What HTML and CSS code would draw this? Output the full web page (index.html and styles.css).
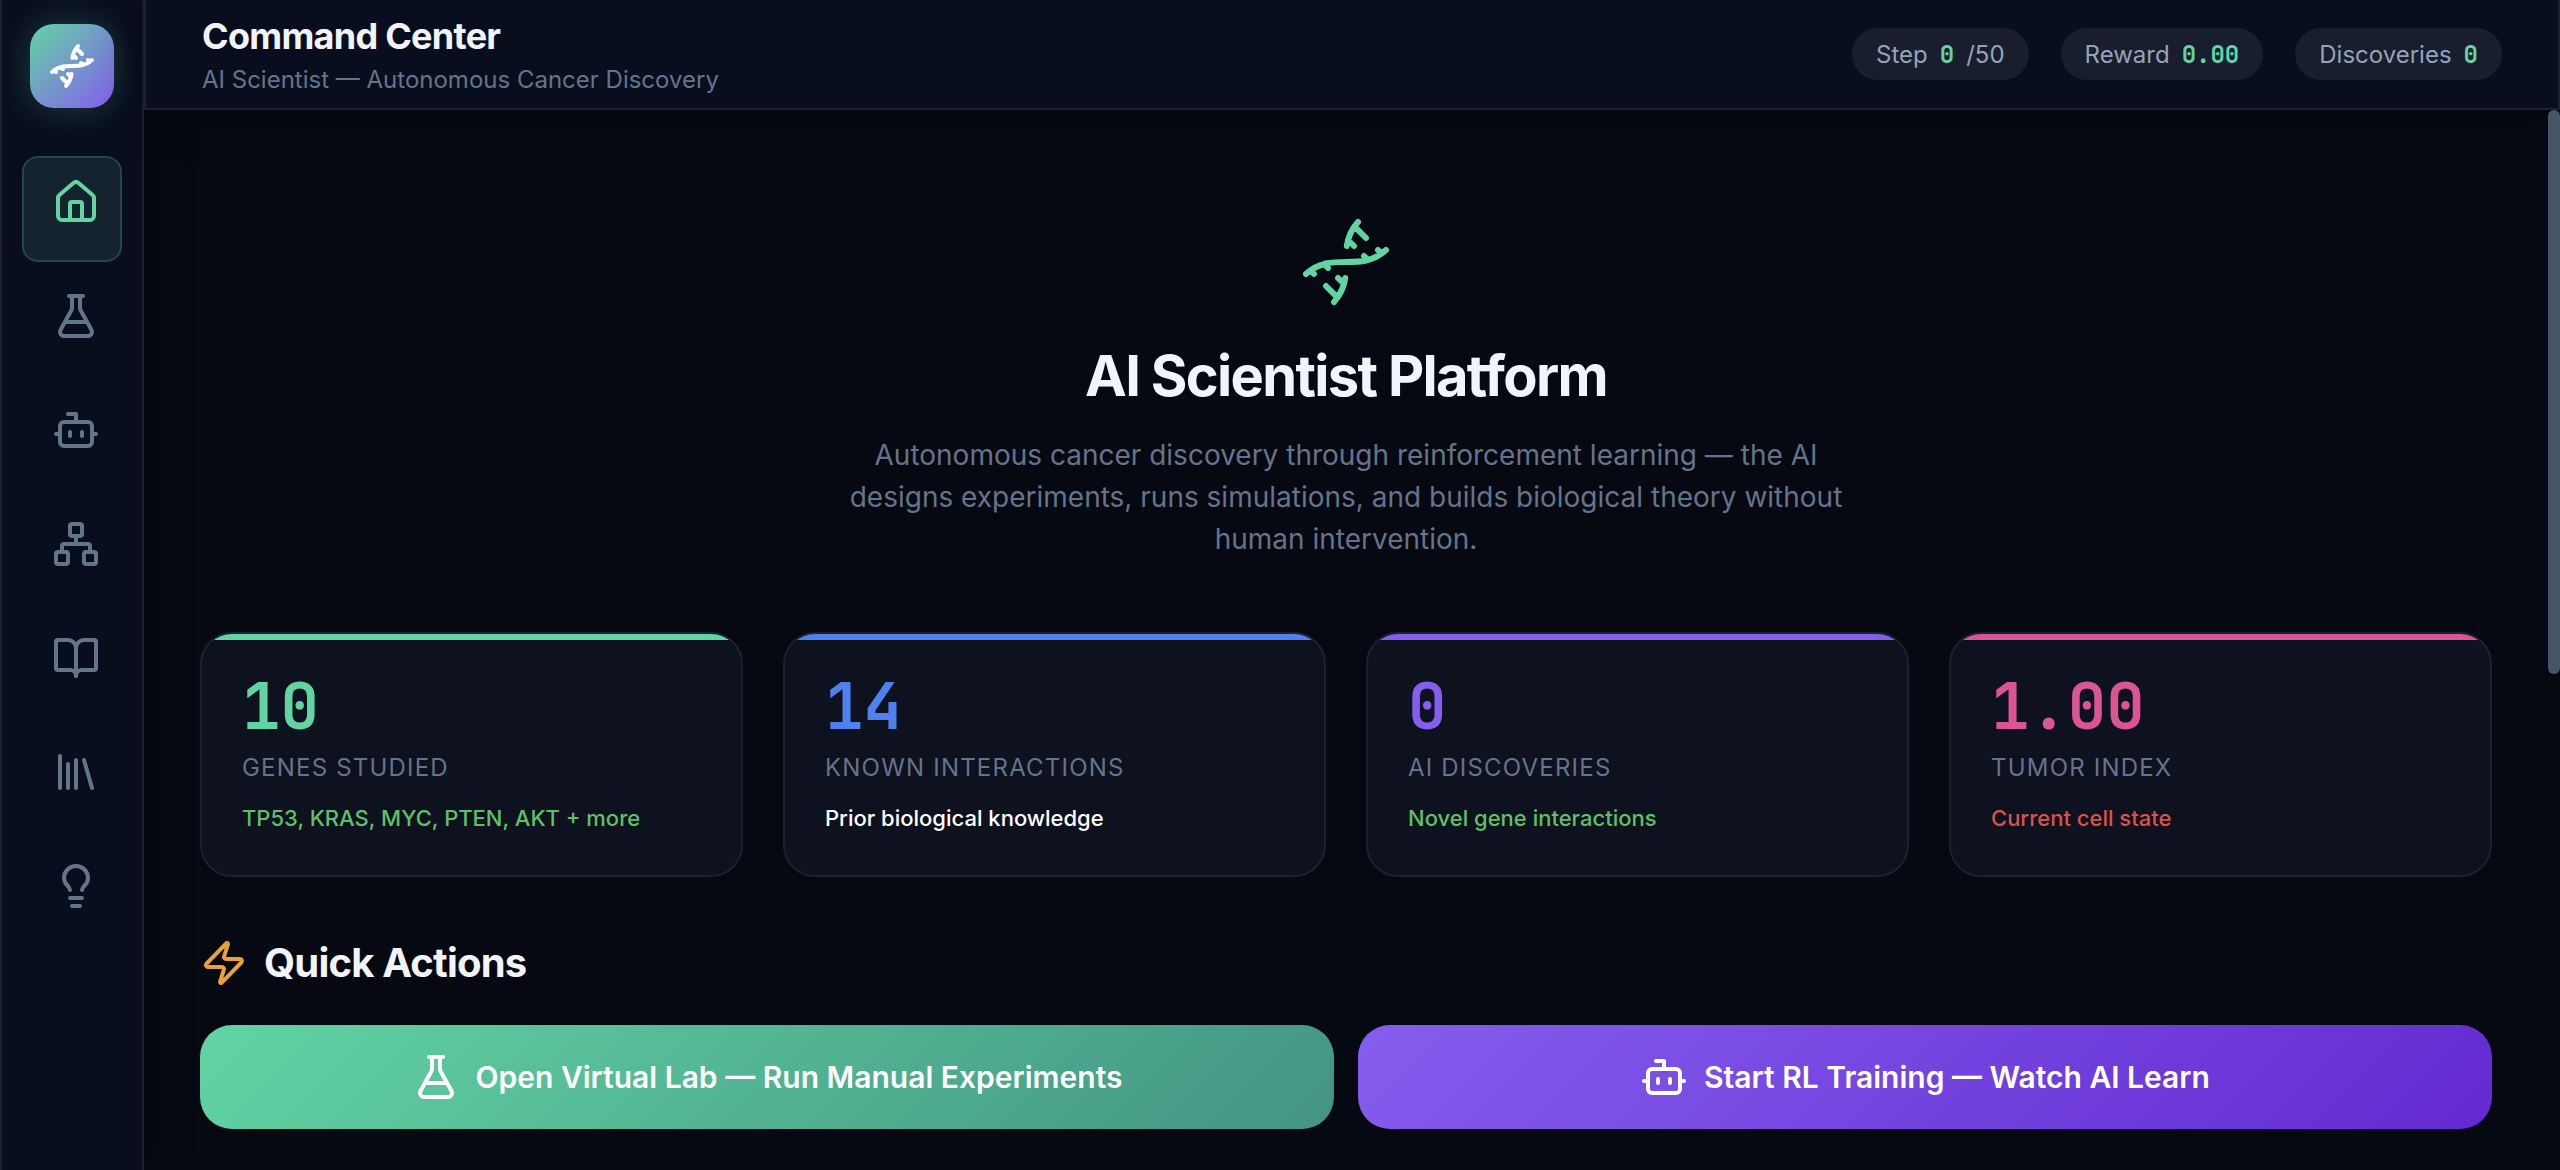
FILE: index.html
```html
<!DOCTYPE html>
<html lang="en">
<head>
<meta charset="utf-8">
<meta name="viewport" content="width=device-width, initial-scale=1">
<title>Command Center</title>
<link rel="stylesheet" href="styles.css">
</head>
<body>
<svg class="sprite" aria-hidden="true">
  <symbol id="dna" viewBox="0 0 24 24"><path d="m10 16 1.5 1.5M14 8l-1.5-1.5M15 2c-1.798 1.998-2.518 3.995-2.807 5.993M16.5 10.5l1 1M17 6l-2.891-2.891M2 15c6.667-6 13.333 0 20-6M20 9l.891.891M3.109 14.109 4 15M6.5 12.5l1 1M7 18l2.891 2.891M9 22c1.798-1.998 2.518-3.995 2.807-5.993"/></symbol>
  <symbol id="house" viewBox="0 0 24 24"><path d="M15 21v-8a1 1 0 0 0-1-1h-4a1 1 0 0 0-1 1v8"/><path d="M3 10a2 2 0 0 1 .709-1.528l7-5.999a2 2 0 0 1 2.582 0l7 5.999A2 2 0 0 1 21 10v9a2 2 0 0 1-2 2H5a2 2 0 0 1-2-2z"/></symbol>
  <symbol id="flask" viewBox="0 0 24 24"><path d="M14 2v6a2 2 0 0 0 .245.96l5.51 10.08A2 2 0 0 1 18 22H6a2 2 0 0 1-1.755-2.96l5.51-10.08A2 2 0 0 0 10 8V2M6.453 15h11.094M8.5 2h7"/></symbol>
  <symbol id="bot" viewBox="0 0 24 24"><path d="M12 8V4H8"/><rect width="16" height="12" x="4" y="8" rx="2"/><path d="M2 14h2M20 14h2M15 13v2M9 13v2"/></symbol>
  <symbol id="network" viewBox="0 0 24 24"><rect x="16" y="16" width="6" height="6" rx="1"/><rect x="2" y="16" width="6" height="6" rx="1"/><rect x="9" y="2" width="6" height="6" rx="1"/><path d="M5 16v-3a1 1 0 0 1 1-1h12a1 1 0 0 1 1 1v3M12 12V8"/></symbol>
  <symbol id="book" viewBox="0 0 24 24"><path d="M12 7v14"/><path d="M3 18a1 1 0 0 1-1-1V4a1 1 0 0 1 1-1h5a4 4 0 0 1 4 4 4 4 0 0 1 4-4h5a1 1 0 0 1 1 1v13a1 1 0 0 1-1 1h-6a3 3 0 0 0-3 3 3 3 0 0 0-3-3z"/></symbol>
  <symbol id="library" viewBox="0 0 24 24"><path d="m16 6 4 14M12 6v14M8 8v12M4 4v16"/></symbol>
  <symbol id="bulb" viewBox="0 0 24 24"><path d="M15 14c.2-1 .7-1.7 1.5-2.5 1-.9 1.5-2.2 1.5-3.5A6 6 0 0 0 6 8c0 1 .2 2.2 1.5 3.5.7.7 1.3 1.5 1.5 2.5M9 18h6M10 22h4"/></symbol>
  <symbol id="zap" viewBox="0 0 24 24"><path d="M4 14a1 1 0 0 1-.78-1.63l9.9-10.2a.5.5 0 0 1 .86.46l-1.92 6.02A1 1 0 0 0 13 10h7a1 1 0 0 1 .78 1.63l-9.9 10.2a.5.5 0 0 1-.86-.46l1.92-6.02A1 1 0 0 0 11 14z"/></symbol>
</svg>
<div class="app">
  <aside class="sidebar">
    <div class="logo"><svg class="icon"><use href="#dna"/></svg></div>
    <nav class="nav" aria-label="Main">
      <a class="nav-item active" href="#home" aria-label="Command Center"><svg class="icon"><use href="#house"/></svg></a>
      <a class="nav-item" href="#lab" aria-label="Virtual Lab"><svg class="icon"><use href="#flask"/></svg></a>
      <a class="nav-item" href="#training" aria-label="RL Training"><svg class="icon"><use href="#bot"/></svg></a>
      <a class="nav-item" href="#network-view" aria-label="Gene Network"><svg class="icon"><use href="#network"/></svg></a>
      <a class="nav-item" href="#theory" aria-label="Theory"><svg class="icon"><use href="#book"/></svg></a>
      <a class="nav-item" href="#archive" aria-label="Library"><svg class="icon"><use href="#library"/></svg></a>
      <a class="nav-item" href="#insights" aria-label="Insights"><svg class="icon"><use href="#bulb"/></svg></a>
    </nav>
  </aside>
  <div class="workspace">
    <header class="topbar">
      <div class="heading">
        <h1 class="page-title">Command Center</h1>
        <p class="page-subtitle">AI Scientist — Autonomous Cancer Discovery</p>
      </div>
      <div class="pills">
        <div class="pill"><span>Step</span><b class="pill-value">0</b><span>/50</span></div>
        <div class="pill"><span>Reward</span><b class="pill-value">0.00</b></div>
        <div class="pill"><span>Discoveries</span><b class="pill-value">0</b></div>
      </div>
    </header>
    <div class="viewport">
      <main class="content">
        <section class="hero">
          <svg class="hero-icon"><use href="#dna"/></svg>
          <h2 class="hero-title">AI Scientist Platform</h2>
          <p class="hero-text">Autonomous cancer discovery through reinforcement learning — the AI designs experiments, runs simulations, and builds biological theory without human intervention.</p>
        </section>
        <section class="stats">
          <article class="card green">
            <div class="card-value">10</div>
            <div class="card-label">Genes Studied</div>
            <div class="card-note positive">TP53, KRAS, MYC, PTEN, AKT + more</div>
          </article>
          <article class="card blue">
            <div class="card-value">14</div>
            <div class="card-label">Known Interactions</div>
            <div class="card-note">Prior biological knowledge</div>
          </article>
          <article class="card purple">
            <div class="card-value">0</div>
            <div class="card-label">AI Discoveries</div>
            <div class="card-note positive">Novel gene interactions</div>
          </article>
          <article class="card pink">
            <div class="card-value">1.00</div>
            <div class="card-label">Tumor Index</div>
            <div class="card-note negative">Current cell state</div>
          </article>
        </section>
        <section>
          <h2 class="section-title"><svg class="icon"><use href="#zap"/></svg>Quick Actions</h2>
          <div class="actions">
            <button class="action lab" type="button"><svg class="icon"><use href="#flask"/></svg>Open Virtual Lab — Run Manual Experiments</button>
            <button class="action training" type="button"><svg class="icon"><use href="#bot"/></svg>Start RL Training — Watch AI Learn</button>
          </div>
        </section>
      </main>
      <div class="scroll-track" aria-hidden="true"><div class="scroll-thumb"></div></div>
    </div>
  </div>
</div>
</body>
</html>
```
FILE: styles.css
```css
:root {
  --bg: #060911;
  --panel: #090e1f;
  --card: #0e111e;
  --line: #1c2131;
  --text: #f1f5f9;
  --muted: #64748b;
  --green: #62d4a4;
  --blue: #4f80ee;
  --purple: #855eee;
  --pink: #d95594;
  --mono: "JetBrains Mono", "DejaVu Sans Mono", monospace;
}

* { box-sizing: border-box; }

body, h1, h2, p { margin: 0; }

body {
  background: var(--bg);
  color: var(--text);
  font-family: Inter, "Liberation Sans", sans-serif;
  overflow: hidden;
}

.sprite { display: none; }

.icon, .hero-icon {
  display: block;
  flex: none;
  width: 48px;
  height: 48px;
  fill: none;
  stroke: currentColor;
  stroke-width: 2;
  stroke-linecap: round;
  stroke-linejoin: round;
}

.app {
  display: flex;
  height: 100vh;
}

/* Sidebar */
.sidebar {
  display: flex;
  flex-direction: column;
  align-items: center;
  gap: 48px;
  flex: none;
  width: 144px;
  padding: 24px 20px;
  background: var(--panel);
  border: solid var(--line);
  border-width: 0 2px;
  box-shadow: 0 0 48px rgba(0, 0, 0, 0.4);
}

.logo {
  display: grid;
  place-items: center;
  width: 84px;
  height: 84px;
  border-radius: 24px;
  background: linear-gradient(135deg, var(--green), var(--purple));
  box-shadow: 0 0 32px rgba(98, 212, 164, 0.25);
  color: #fff;
}

.nav {
  display: flex;
  flex-direction: column;
  gap: 8px;
  width: 100%;
}

.nav-item {
  padding: 20px 20px 34px 28px;
  border: 2px solid transparent;
  border-radius: 16px;
  color: var(--muted);
}

.nav-item.active {
  background: #14232d;
  border-color: #234742;
  color: var(--green);
}

/* Top bar */
.workspace {
  display: flex;
  flex-direction: column;
  flex: 1;
  min-width: 0;
}

.topbar {
  display: flex;
  align-items: center;
  justify-content: space-between;
  flex: none;
  height: 110px;
  padding: 0 56px;
  background: var(--panel);
  border: solid var(--line);
  border-width: 0 2px 2px;
  box-shadow: 0 0 48px rgba(0, 0, 0, 0.4);
}

.heading { padding-top: 4px; }

.page-title {
  font-size: 36px;
  line-height: 44px;
  font-weight: 700;
  letter-spacing: -0.02em;
}

.page-subtitle {
  margin-top: 4px;
  color: var(--muted);
  font-size: 24px;
  line-height: 36px;
}

.pills {
  display: flex;
  gap: 32px;
}

.pill {
  display: flex;
  align-items: center;
  gap: 12px;
  height: 52px;
  padding: 0 24px;
  border-radius: 26px;
  background: #191e2f;
  color: #94a3b8;
  font-size: 24px;
}

.pill-value {
  color: var(--green);
  font-family: var(--mono);
  font-weight: 700;
}

/* Page content */
.viewport {
  display: flex;
  flex: 1;
  min-height: 0;
}

.content {
  flex: 1;
  min-width: 0;
  padding: 104px 56px 56px;
}

.hero {
  display: flex;
  flex-direction: column;
  align-items: center;
  text-align: center;
}

.hero-icon {
  width: 96px;
  height: 96px;
  stroke-width: 1.5;
  color: var(--green);
}

.hero-title {
  margin-top: 32px;
  font-size: 56px;
  line-height: 68px;
  font-weight: 700;
  letter-spacing: -0.03em;
}

.hero-text {
  max-width: 1000px;
  margin-top: 24px;
  color: var(--muted);
  font-size: 28px;
  line-height: 42px;
}

.stats {
  display: grid;
  grid-template-columns: repeat(4, 1fr);
  gap: 40px;
  margin-top: 72px;
}

.card {
  padding: 34px 40px 40px;
  border: 2px solid var(--line);
  border-radius: 32px;
  background: var(--card);
  overflow: hidden;
}

.card::before {
  content: "";
  display: block;
  height: 6px;
  margin: -34px -40px 34px;
  background: currentColor;
}

.card.green { color: var(--green); }
.card.blue { color: var(--blue); }
.card.purple { color: var(--purple); }
.card.pink { color: var(--pink); }

.card-value {
  font-family: var(--mono);
  font-size: 64px;
  line-height: 64px;
  font-weight: 700;
}

.card-label {
  margin-top: 12px;
  color: var(--muted);
  font-size: 24px;
  line-height: 36px;
  letter-spacing: 0.05em;
  text-transform: uppercase;
}

.card-note {
  margin-top: 16px;
  color: #fff;
  font-size: 22px;
  line-height: 33px;
  font-weight: 500;
}

.card-note.positive { color: #5fc068; }
.card-note.negative { color: #d9534b; }

.section-title {
  display: flex;
  align-items: center;
  gap: 16px;
  margin-top: 62px;
  font-size: 40px;
  line-height: 48px;
  font-weight: 700;
  letter-spacing: -0.02em;
}

.section-title .icon { color: #e9a23b; }

.actions {
  display: grid;
  grid-template-columns: repeat(2, 1fr);
  gap: 24px;
  margin-top: 38px;
}

.action {
  display: flex;
  align-items: center;
  justify-content: center;
  gap: 16px;
  height: 104px;
  border: 0;
  border-radius: 32px;
  color: #fff;
  font-family: inherit;
  font-size: 30px;
  font-weight: 600;
}

.action.lab { background: linear-gradient(135deg, var(--green), #439482); }
.action.training { background: linear-gradient(135deg, var(--purple), #632ad0); }

/* Scroll indicator */
.scroll-track {
  flex: none;
  width: 12px;
}

.scroll-thumb {
  height: 53.2%;
  border-radius: 6px;
  background: #475569;
}
```
